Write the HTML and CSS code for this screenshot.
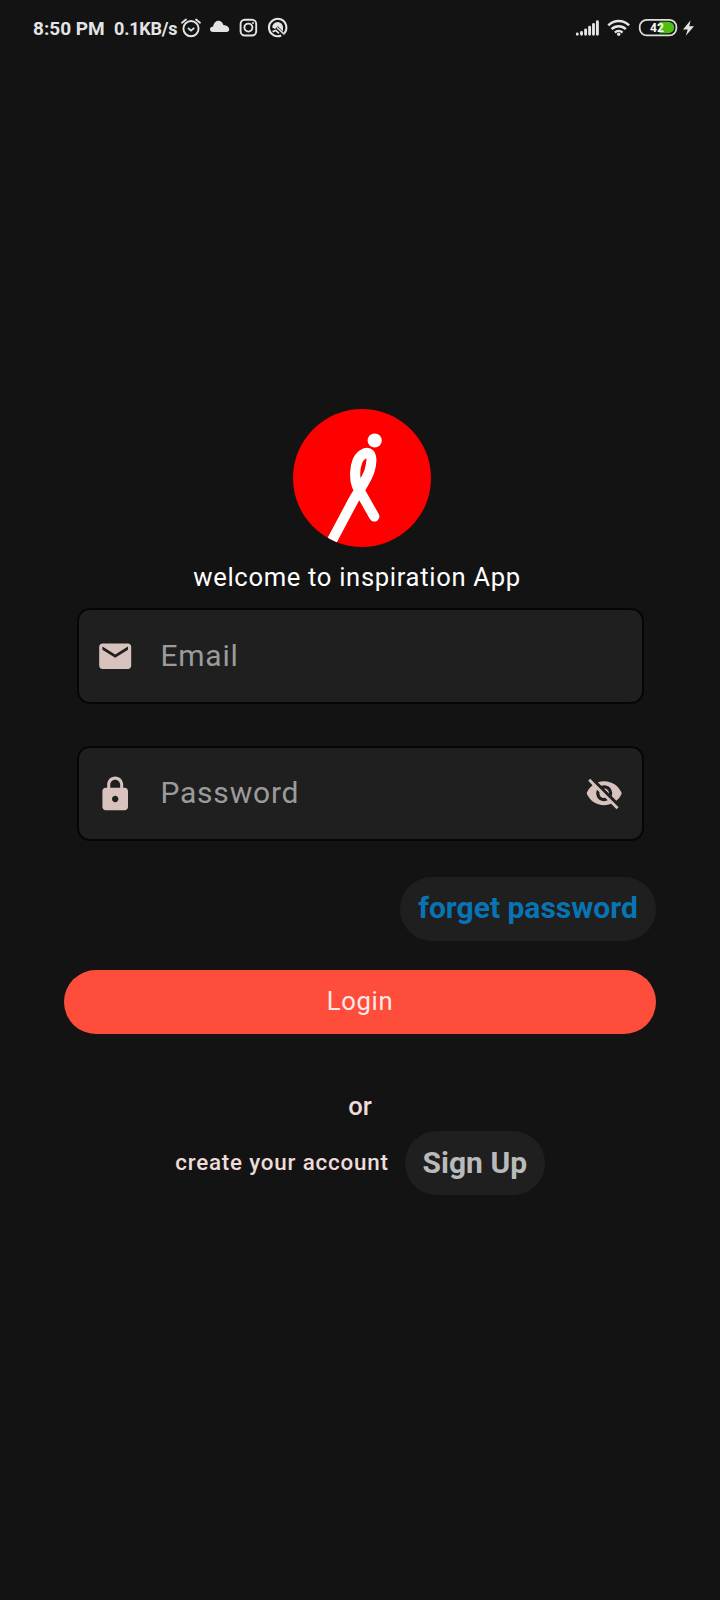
FILE: index.html
```html
<!DOCTYPE html>
<html lang="en">
<head>
<meta charset="utf-8">
<title>Login</title>
<link rel="stylesheet" href="styles.css">
</head>
<body>
<header class="status">
  <span class="clock">8:50 PM</span>
  <span class="speed">0.1KB/s</span>
  <svg class="status-left" width="110" height="24" viewBox="180 16 110 24" fill="none" stroke="#e4e4e4">
    <circle cx="191" cy="28.6" r="7.6" stroke-width="1.9"/>
    <path d="M182 22.8l4-3.3M200 22.8l-4-3.3" stroke-width="1.8" stroke-linecap="round"/>
    <path d="M188 28l3 2.7 3.3-2.9" stroke-width="1.7"/>
    <path d="M213.300 32C210.800 32 210 30.800 210 29.300C210 27.500 211.500 26.800 213.200 26.500C213.600 23.500 215.600 20.800 218.400 20.800C221 20.800 222.600 22.700 223.400 25C226.800 25.200 229.200 27 229.200 29.500C229.200 31.100 228.200 32 226.500 32Z" fill="#e4e4e4" stroke="none"/>
    <rect x="240.600" y="19.700" width="15.600" height="15.800" rx="4.200" stroke-width="1.900"/>
    <circle cx="248.400" cy="27.600" r="4" stroke-width="1.900"/>
    <circle cx="253" cy="23" r="1" fill="#e4e4e4" stroke="none"/>
    <path d="M281.200 35.500A8.700 8.700 0 1 1 284.300 33.200" stroke-width="2.100"/>
    <path d="M272.200 27.500A5.400 5.400 0 0 1 283 27.300L283 31.500L277.800 26.300L275 29Z" fill="#e4e4e4" stroke="none"/>
    <path d="M277 27.500L284.500 34.500M272.500 31.600l3.400-1.200 3 3" stroke-width="1.700"/>
  </svg>
  <svg class="status-right" width="124" height="24" viewBox="574 16 124 24">
    <g fill="none" stroke="#e4e4e4" stroke-linecap="round" stroke-width="2.900">
      <path d="M577.300 34.300v-.3M581.500 34.200v-1.700M585.600 34.200v-4.200M589.600 34.200v-7M593.500 34.200v-9.800M597.400 34.200v-12.500"/>
    </g>
    <g fill="none" stroke="#e4e4e4" stroke-width="2.500">
      <path d="M608.300 25.400a14.700 14.700 0 0 1 20.800 0M611.600 29.100a10 10 0 0 1 14.200 0M614.900 32.600a5.400 5.400 0 0 1 7.600 0"/>
    </g>
    <circle cx="618.700" cy="34.200" r="1.700" fill="#e4e4e4"/>
    <rect x="639.700" y="19.800" width="36.700" height="15.600" rx="7.200" fill="none" stroke="#dedede" stroke-width="1.800"/>
    <path d="M659.500 21.800h9a5.700 5.700 0 0 1 0 11.500h-9z" fill="#50bd15"/>
    <text class="level" x="650.100" y="32.300">42</text>
    <path d="M690.600 20.200L683 29.500h4.700l-1.900 6.200 8.200-9.500h-4.700z" fill="#e4e4e4"/>
  </svg>
</header>
<main class="screen">
  <svg class="logo" viewBox="0 0 138 138">
    <defs><clipPath id="disc"><circle cx="69" cy="69" r="69"/></clipPath></defs>
    <circle cx="69" cy="69" r="69" fill="#f00"/>
    <g clip-path="url(#disc)">
      <circle cx="81.700" cy="31.500" r="7.100" fill="#fff"/>
      <path d="M81.300 107.500L64 77C61 69 62 58 64.500 52C67 46 73 42.500 76 44.500C80 47 78.500 55 76.500 62C74 70 68 78 60 92L35 139" fill="none" stroke="#fff" stroke-width="10.200" stroke-linecap="round" stroke-linejoin="round"/>
    </g>
  </svg>
  <p class="welcome">welcome to inspiration App</p>
  <form class="form">
    <div class="field">
      <svg class="icon" viewBox="0 0 24 24"><path d="M20 4H4c-1.100 0-2 .9-2 2v12c0 1.100.9 2 2 2h16c1.100 0 2-.9 2-2V6c0-1.100-.9-2-2-2zm0 4l-8 5-8-5V6l8 5 8-5v2z"/></svg>
      <span class="placeholder">Email</span>
    </div>
    <div class="field">
      <svg class="icon lock" viewBox="0 0 24 24"><path d="M18 8h-1V6c0-2.760-2.240-5-5-5S7 3.240 7 6v2H6c-1.100 0-2 .9-2 2v10c0 1.100.9 2 2 2h12c1.100 0 2-.9 2-2V10c0-1.100-.9-2-2-2zm-6 9c-1.100 0-2-.9-2-2s.9-2 2-2 2 .9 2 2-.9 2-2 2zm3.100-9H8.900V6c0-1.710 1.390-3.100 3.100-3.100s3.100 1.390 3.100 3.100v2z"/></svg>
      <span class="placeholder raised">Password</span>
      <svg class="icon" viewBox="0 0 24 24"><path d="M12 7c2.760 0 5 2.240 5 5 0 .65-.13 1.260-.36 1.830l2.920 2.920c1.510-1.260 2.700-2.890 3.430-4.750-1.730-4.390-6-7.500-11-7.500-1.400 0-2.740.25-3.980.7l2.160 2.160C10.740 7.130 11.350 7 12 7zM2 4.270l2.280 2.280.46.46C3.080 8.300 1.780 10.020 1 12c1.730 4.390 6 7.500 11 7.500 1.550 0 3.030-.3 4.380-.84l.42.42L19.730 22 21 20.730 3.270 3 2 4.270zM7.530 9.800l1.550 1.550c-.05.21-.08.43-.08.65 0 1.660 1.340 3 3 3 .22 0 .44-.03.65-.08l1.550 1.550c-.67.33-1.410.53-2.200.53-2.760 0-5-2.240-5-5 0-.79.2-1.530.53-2.200zm4.310-.78l3.150 3.150.02-.16c0-1.660-1.340-3-3-3l-.17.01z"/></svg>
    </div>
  </form>
  <button class="pill forgot">forget password</button>
  <button class="login">Login</button>
  <p class="or">or</p>
  <div class="signup">
    <span class="create">create your account</span>
    <button class="pill sign">Sign Up</button>
  </div>
</main>
</body>
</html>
```
FILE: styles.css
```css
* { box-sizing: border-box; }
body {
  margin: 0;
  height: 1600px;
  background: #131313;
  color: #fff;
  font-family: Roboto, sans-serif;
}
p { margin: 0; }
button { border: 0; margin: 0; padding: 0; font-family: inherit; }
.status {
  display: flex;
  height: 56px;
  padding: 17px 22px 0 33px;
  color: #e4e4e4;
  font-size: 19px;
  font-weight: 700;
  line-height: 24px;
  white-space: nowrap;
}
.status svg { margin-top: -1px; }
.clock { width: 81px; }
.speed { width: 66px; font-size: 18px; letter-spacing: -0.2px; }
.status-right { margin-left: auto; }
.level { font-size: 12px; font-weight: 700; fill: #fff; }
.screen {
  display: flex;
  flex-direction: column;
  align-items: center;
  padding: 353px 64px 0;
}
.logo { width: 138px; height: 138px; margin-left: 3px; }
.welcome {
  margin-top: 15px;
  margin-right: 6px;
  font-size: 25.600px;
  line-height: 30px;
  letter-spacing: 0.68px;
}
.form {
  display: flex;
  flex-direction: column;
  gap: 42px;
  width: 567px;
  margin-top: 16px;
}
.field {
  display: flex;
  align-items: center;
  height: 95.500px;
  padding: 0 18px 0 17.500px;
  border: 2px solid #060606;
  border-radius: 13px;
  background: #1f1f1f;
}
.icon { width: 38.400px; height: 38.400px; fill: #d8c2be; }
.lock { margin-top: 1px; }
.placeholder {
  flex: 1;
  margin-left: 26px;
  color: #9b9b9b;
  font-size: 30px;
  letter-spacing: 0.8px;
}
.raised { padding-bottom: 2px; }
.pill {
  height: 64px;
  padding-bottom: 2px;
  border-radius: 32px;
  background: #1f1f1f;
  font-size: 30px;
  font-weight: 700;
}
.forgot {
  align-self: flex-end;
  width: 256px;
  margin-top: 35.500px;
  color: #0874b4;
}
.login {
  width: 592px;
  height: 64px;
  margin-top: 29px;
  padding-bottom: 1px;
  border-radius: 32px;
  background: #ff4d3c;
  color: #fbeae7;
  font-size: 25.600px;
  letter-spacing: 0.7px;
}
.or {
  margin-top: 57.500px;
  color: #eddcd9;
  font-size: 25.600px;
  font-weight: 500;
  line-height: 30px;
}
.signup {
  display: flex;
  align-items: center;
  gap: 16px;
  margin-top: 10px;
}
.create {
  padding-bottom: 2px;
  color: #eddcd9;
  font-size: 22.400px;
  font-weight: 500;
  letter-spacing: 0.8px;
}
.sign { width: 140px; color: #bababa; }
```
